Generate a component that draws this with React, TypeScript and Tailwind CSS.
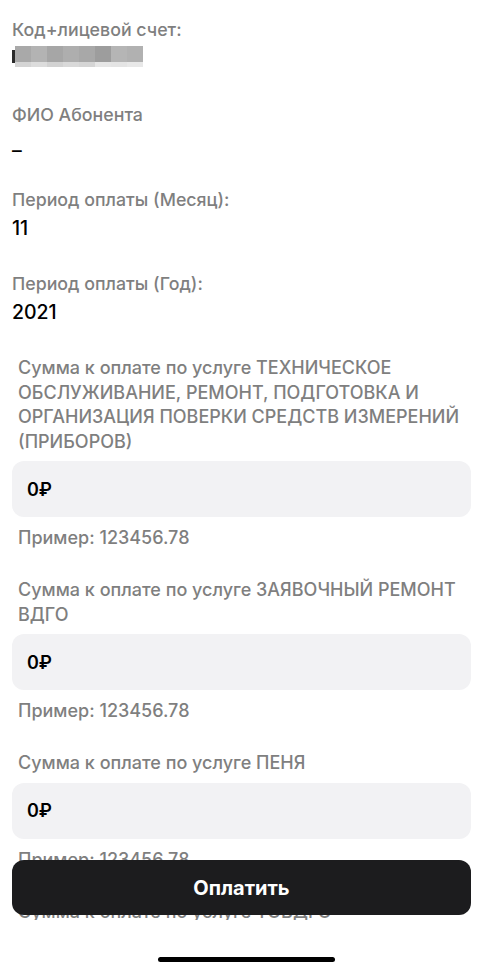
const blur = ["#a9a9a9", "#b3b3b3", "#a6a6a6", "#aeaeae", "#a8a8a8", "#9d9d9d", "#b5b5b5", "#b1b1b1"];
const blurLow = ["#d4d4d4", "#dcdcdc", "#d2d2d2", "#d9d9d9", "#d5d5d5", "#e6e6e6", "#e4e4e4", "#e8e8e8"];

const Field = ({ label, value }: { label: string; value: React.ReactNode }) => (
  <div className="flex flex-col">
    <p className="text-[17.8px] leading-6 font-medium text-[#7f7f7f]">{label}</p>
    <div className="mt-[4px]">{value}</div>
  </div>
);

const AmountInput = ({ label }: { label: React.ReactNode }) => (
  <div className="flex flex-col">
    <p className="px-[6px] text-[18px] leading-[24.5px] font-medium text-[#7f7f7f]">{label}</p>
    <div className="mt-[7px] flex h-[56px] w-[459px] items-center rounded-[12px] bg-[#f2f2f4] px-[15px]">
      <span className="text-[18px] font-semibold text-black">0₽</span>
    </div>
    <p className="mt-[9px] px-[6px] text-[18px] leading-6 font-medium text-[#7f7f7f]">Пример: 123456.78</p>
  </div>
);

export default function App() {
  return (
    <div
      className="relative h-[973px] w-[493px] overflow-hidden bg-white"
      style={{ fontFamily: "Inter, 'Noto Sans', sans-serif" }}
    >
      <div className="flex flex-col px-[12px] pt-[18px]">
        <Field
          label="Код+лицевой счет:"
          value={
            <div className="flex h-[21px] items-start">
              <div className="mt-[4px] h-[13px] w-[3px] bg-[#2a2a2a]" />
              <div className="flex flex-col">
                <div className="flex">
                  {blur.map((c, i) => (
                    <div key={i} className="h-[16px] w-[16px]" style={{ backgroundColor: c }} />
                  ))}
                </div>
                <div className="flex">
                  {blurLow.map((c, i) => (
                    <div key={i} className="h-[5px] w-[16px]" style={{ backgroundColor: c }} />
                  ))}
                </div>
              </div>
            </div>
          }
        />
        <div className="mt-[36px]">
          <Field label="ФИО Абонента" value={<p className="mt-[7px] text-[19.5px] leading-6 font-medium text-black">–</p>} />
        </div>
        <div className="mt-[26px]">
          <Field label="Период оплаты (Месяц):" value={<p className="text-[19.5px] leading-6 font-medium text-black">11</p>} />
        </div>
        <div className="mt-[32px]">
          <Field label="Период оплаты (Год):" value={<p className="text-[19.5px] leading-6 font-medium text-black">2021</p>} />
        </div>

        <div className="mt-[32px] flex flex-col gap-[28px]">
          <AmountInput
            label={
              <>
                Сумма к оплате по услуге ТЕХНИЧЕСКОЕ
                <br />
                ОБСЛУЖИВАНИЕ, РЕМОНТ, ПОДГОТОВКА И
                <br />
                ОРГАНИЗАЦИЯ ПОВЕРКИ СРЕДСТВ ИЗМЕРЕНИЙ
                <br />
                (ПРИБОРОВ)
              </>
            }
          />
          <AmountInput
            label={
              <>
                Сумма к оплате по услуге ЗАЯВОЧНЫЙ РЕМОНТ
                <br />
                ВДГО
              </>
            }
          />
          <AmountInput label="Сумма к оплате по услуге ПЕНЯ" />
          <AmountInput label="Сумма к оплате по услуге ТОВДГО" />
        </div>
      </div>

      {/* bottom overlay: pay button + home indicator */}
      <div className="absolute bottom-0 left-0 flex w-full flex-col">
        <div className="px-[12px]">
          <button className="flex h-[55px] w-[459px] items-center justify-center rounded-[12px] bg-[#1c1c1e] text-[20px] font-bold text-white">
            Оплатить
          </button>
        </div>
        <div className="mt-[5px] flex h-[53px] items-start justify-center bg-white">
          <div className="mt-[37px] h-[5px] w-[177px] rounded-full bg-black" />
        </div>
      </div>
    </div>
  );
}
